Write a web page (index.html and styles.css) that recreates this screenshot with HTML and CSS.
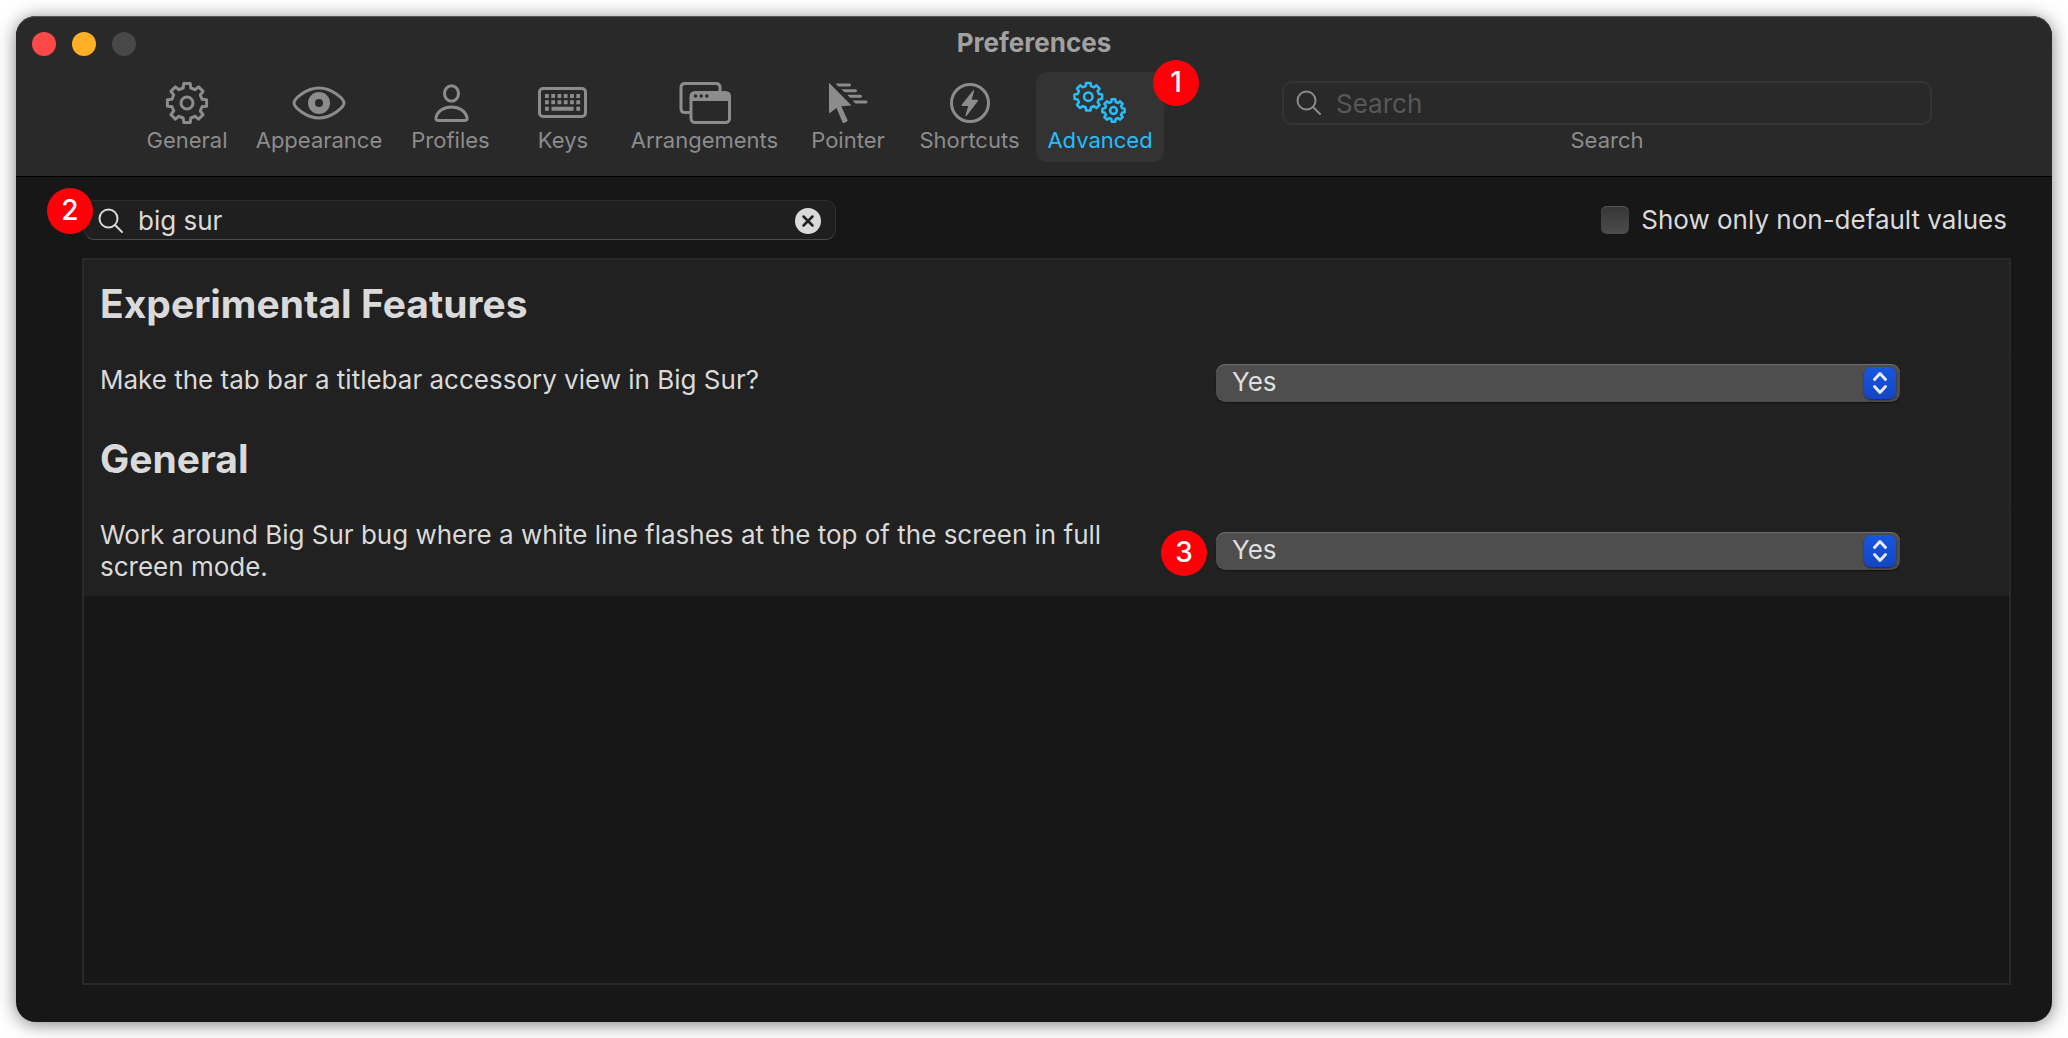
FILE: index.html
```html
<!DOCTYPE html>
<html lang="en">
<head>
<meta charset="utf-8">
<title>Preferences</title>
<link rel="stylesheet" href="styles.css">
</head>
<body>
<svg class="defs" aria-hidden="true">
  <symbol id="gear" viewBox="-22 -22 44 44" overflow="visible">
    <path vector-effect="non-scaling-stroke" d="M-3.8-15L-3.2-19.6H3.2L3.8-15L8-13.3L11.6-16.1L16.1-11.6L13.3-8L15-3.8L19.6-3.2V3.2L15 3.8L13.3 8L16.1 11.6L11.6 16.1L8 13.3L3.8 15L3.2 19.6H-3.2L-3.8 15L-8 13.3L-11.6 16.1L-16.1 11.6L-13.3 8L-15 3.8L-19.6 3.2V-3.2L-15-3.8L-13.3-8L-16.1-11.6L-11.6-16.1L-8-13.3Z"/>
    <circle vector-effect="non-scaling-stroke" r="6"/>
  </symbol>
  <symbol id="lens" viewBox="0 0 26 26">
    <circle cx="10.500" cy="10.500" r="9"/>
    <path d="M17 17L24 24"/>
  </symbol>
</svg>

<main class="window">
  <header class="titlebar">
    <div class="title-row">
      <div class="lights">
        <button class="light close" aria-label="Close"></button>
        <button class="light minimize" aria-label="Minimize"></button>
        <button class="light" aria-label="Zoom" disabled></button>
      </div>
      <h1 class="title">Preferences</h1>
    </div>
    <div class="toolbar">
      <nav class="tabs">
        <button class="tab">
          <svg class="icon" viewBox="0 0 56 44"><use href="#gear" x="6" y="0" width="44" height="44"/></svg>
          General
        </button>
        <button class="tab">
          <svg class="icon" viewBox="0 0 56 44"><path d="M3 22C3 18 15 7 28 7S53 18 53 22S41 37 28 37S3 26 3 22Z"/><circle cx="28" cy="22" r="7.500" stroke-width="7"/></svg>
          Appearance
        </button>
        <button class="tab">
          <svg class="icon" viewBox="0 0 56 44"><ellipse cx="28.500" cy="12.500" rx="7" ry="7.800"/><path d="M15 39.500H42Q44.500 39.500 44 36.500C42.500 30 36 26 28.500 26S14.500 30 13 36.500Q12.500 39.500 15 39.500Z"/></svg>
          Profiles
        </button>
        <button class="tab">
          <svg class="icon" viewBox="0 0 56 44"><rect x="4.500" y="7.500" width="46" height="28" rx="3.500"/><path stroke-width="4" stroke-dasharray="3.800 2.460" d="M10 15H46M10 21.300H46"/><path stroke-width="4" d="M10 27.700H13.800M16.500 27.700H38.600M41.300 27.700H45.100"/></svg>
          Keys
        </button>
        <button class="tab">
          <svg class="icon" viewBox="0 0 56 44"><path d="M13 31.500H8Q4 31.500 4 27.500V6.500Q4 2.500 8 2.500H39Q43 2.500 43 6.500V11"/><rect x="14" y="11.500" width="38.500" height="30" rx="4"/><path class="fill" d="M13 20V14Q13 11 17 11H50Q53.500 11 53.500 14V20Z"/><g class="hole"><circle cx="18.500" cy="15" r="1.700"/><circle cx="24.200" cy="15" r="1.700"/><circle cx="29.800" cy="15" r="1.700"/></g></svg>
          Arrangements
        </button>
        <button class="tab">
          <svg class="icon" viewBox="0 0 56 44"><path class="fill" d="M9 1.800L31.500 24.500L21.300 25.300L27.800 39.800Q25.500 42 22.800 42L16.500 27L9.500 32.300L9 31.500Z"/><path class="fill" d="M15.500 2.500H30Q32 4 30 5.500H18.500ZM21.500 8.300H36Q38 9.800 36 11.200H24.500ZM27.200 13.800H41Q43 15.300 41 16.700H30.200ZM32.500 19.400H46.500Q48.500 20.900 46.500 22.500H35.500Z"/></svg>
          Pointer
        </button>
        <button class="tab">
          <svg class="icon" viewBox="0 0 56 44"><circle cx="28" cy="22" r="18.500"/><path class="fill" d="M31.500 9Q32.500 9 32 10.500L29.600 18.800H35.300Q36.600 19.200 35.800 20.300L24.700 34.800Q23.300 35.600 23.500 34L26.300 25H20.300Q19 24.600 20 23.300Z"/></svg>
          Shortcuts
        </button>
        <button class="tab selected" aria-current="page">
          <svg class="icon icon-gears" viewBox="0 0 56 44"><use href="#gear" x="0.800" y="0.200" width="31" height="31"/><use href="#gear" x="29" y="17" width="25" height="25"/></svg>
          Advanced
          <span class="badge badge-tab">1</span>
        </button>
      </nav>
      <div class="toolbar-search">
        <div class="search-box">
          <svg class="lens" viewBox="0 0 26 26"><use href="#lens"/></svg>
          <input id="toolbar-search" type="text" placeholder="Search">
        </div>
        <label for="toolbar-search">Search</label>
      </div>
    </div>
  </header>

  <section class="content">
    <div class="filter-row">
      <div class="filter-box">
        <svg class="lens" viewBox="0 0 26 26"><use href="#lens"/></svg>
        <input type="text" value="big sur" aria-label="Filter settings">
        <button class="clear" aria-label="Clear"><svg viewBox="0 0 26 26"><circle cx="13" cy="13" r="13"/><path d="M8.500 8.500L17.500 17.500M17.500 8.500L8.500 17.500"/></svg></button>
        <span class="badge badge-filter">2</span>
      </div>
      <label class="check"><input type="checkbox">Show only non-default values</label>
    </div>

    <div class="panel">
      <div class="settings">
        <h2 class="group">Experimental Features</h2>
        <div class="setting">
          <label for="tabbar">Make the tab bar a titlebar accessory view in Big Sur?</label>
          <div class="popup">
            <select id="tabbar"><option>Yes</option><option>No</option></select>
            <svg class="stepper" viewBox="0 0 32 32"><path d="M10.500 12.500L16 6.500L21.500 12.500M10.500 19.500L16 25.500L21.500 19.500"/></svg>
          </div>
        </div>
        <h2 class="group">General</h2>
        <div class="setting">
          <label for="whiteline">Work around Big Sur bug where a white line flashes at the top of the screen in full screen mode.</label>
          <div class="popup">
            <select id="whiteline"><option>Yes</option><option>No</option></select>
            <svg class="stepper" viewBox="0 0 32 32"><path d="M10.500 12.500L16 6.500L21.500 12.500M10.500 19.500L16 25.500L21.500 19.500"/></svg>
            <span class="badge badge-popup">3</span>
          </div>
        </div>
      </div>
    </div>
  </section>
</main>
</body>
</html>
```
FILE: styles.css
```css
* { box-sizing: border-box; }

body {
  margin: 0;
  padding: 16px;
  min-height: 100vh;
  display: flex;
  background: #fff;
  color: #dadada;
  font: 26px/32px Inter, "Liberation Sans", sans-serif;
}

button, input, select { font: inherit; color: inherit; }
button { border: 0; padding: 0; background: none; }
svg { fill: none; stroke: currentColor; }
.defs { position: absolute; width: 0; height: 0; }

.window {
  flex: 1;
  min-width: 0;
  display: flex;
  flex-direction: column;
  border-radius: 20px;
  background: #171717;
  box-shadow: 0 2px 18px rgba(0, 0, 0, 0.5);
}

/* Title bar */
.titlebar {
  height: 161px;
  border-radius: 20px 20px 0 0;
  border-bottom: 1px solid #000;
  background: #292929;
  box-shadow: inset 0 2px 0 -1px #555;
}
.title-row {
  display: grid;
  grid-template-columns: 1fr auto 1fr;
  align-items: center;
  height: 56px;
  padding: 0 16px;
}
.lights { display: flex; gap: 16px; }
.light { width: 24px; height: 24px; border-radius: 50%; background: #484848; }
.close { background: #ff4848; }
.minimize { background: #ffb024; }
.title { margin: 0; padding-bottom: 2px; color: #a1a1a1; font-size: 26px; font-weight: 700; line-height: 32px; }

.toolbar {
  display: flex;
  justify-content: space-between;
  padding: 0 120px 0 119px;
  color: #8c8c8c;
  font-size: 22px;
  line-height: 26px;
}
.tabs {
  display: grid;
  grid-template-columns: 104px 160px 103px 122px 161px 126px 117px 136px;
}
.tab {
  position: relative;
  display: flex;
  flex-direction: column;
  align-items: center;
  height: 90px;
  padding-top: 9px;
  gap: 2px;
  border-radius: 12px;
}
.selected { justify-self: end; width: 128px; background: #333; color: #24bfff; }
.icon { width: 56px; height: 44px; stroke-width: 3; stroke-linejoin: round; overflow: visible; }
.icon-gears { stroke-width: 2.5; }
.icon .fill { fill: currentColor; stroke: none; }
.icon .hole { fill: #292929; stroke: none; }

.toolbar-search {
  display: flex;
  flex-direction: column;
  align-items: center;
  gap: 2px;
  width: 650px;
  padding-top: 9px;
}
.search-box {
  display: flex;
  align-items: center;
  gap: 14px;
  width: 100%;
  height: 44px;
  padding: 0 12px;
  border: 2px solid #343434;
  border-radius: 10px;
  font-size: 26px;
}
.lens { flex: none; width: 26px; height: 26px; stroke-width: 2; stroke-linecap: round; }
.search-box input, .filter-box input {
  flex: 1;
  min-width: 0;
  padding: 0;
  border: 0;
  outline: 0;
  background: none;
}
.search-box input::placeholder { color: #585858; opacity: 1; }

/* Content */
.content {
  flex: 1;
  display: flex;
  flex-direction: column;
  gap: 18px;
  padding: 23px 41px 37px 66px;
}
.filter-row { display: flex; justify-content: space-between; align-items: center; padding: 0 4px 0 2px; }
.filter-box {
  position: relative;
  display: flex;
  align-items: center;
  gap: 14px;
  width: 752px;
  height: 40px;
  padding: 1px 14px 0 13px;
  border: 1px solid #2e2e2e;
  border-bottom-color: #4a4a4a;
  border-radius: 10px;
  background: #1f1f1f;
}
.clear, .clear svg { display: block; width: 26px; height: 26px; }
.clear circle { fill: #dadada; stroke: none; }
.clear path { stroke: #1f1f1f; stroke-width: 2.5; stroke-linecap: round; }
.check { display: flex; align-items: center; gap: 12px; }
.check input {
  appearance: none;
  width: 28px;
  height: 28px;
  margin: 0;
  border-radius: 6px;
  background: linear-gradient(#363636, #4c4c4c);
  box-shadow: inset 0 1px 0 #565656;
}

.panel { flex: 1; border: 2px solid #292929; }
.settings { background: #212121; }
.group {
  margin: 0;
  padding: 20px 16px 27px;
  font-size: 39px;
  font-weight: 700;
  line-height: 48px;
}
.setting {
  display: flex;
  justify-content: space-between;
  align-items: center;
  padding: 8px 109px 13px 16px;
  border-top: 1px solid #232323;
}
.setting label { flex: 0 1 1040px; min-height: 38px; }
.popup { position: relative; display: grid; width: 684px; }
.popup select, .stepper { grid-area: 1 / 1; }
.popup select {
  appearance: none;
  height: 38px;
  padding: 0 48px 2px 16px;
  border: 0;
  border-radius: 9px;
  background: #4e4e4e;
  color: #dfdfdf;
  box-shadow: inset 0 1px 0 #6e6e6e, 0 1px 1px #111;
}
.stepper {
  justify-self: end;
  align-self: center;
  width: 32px;
  height: 32px;
  margin-right: 4px;
  border-radius: 7px;
  background: linear-gradient(#1a56e0, #1245c4);
  box-shadow: 0 1px 2px rgba(0, 0, 0, 0.5);
  color: #e4eafa;
  stroke-width: 3;
  stroke-linecap: round;
  stroke-linejoin: round;
  pointer-events: none;
}

/* Numbered callouts */
.badge {
  position: absolute;
  width: 46px;
  height: 46px;
  border-radius: 50%;
  background: #ff0009;
  color: #fff;
  font-size: 28px;
  font-weight: 500;
  line-height: 44px;
  text-align: center;
}
.badge-tab { top: -12px; right: -35px; }
.badge-filter { top: -13px; left: -38px; }
.badge-popup { top: -2px; left: -55px; }
```
